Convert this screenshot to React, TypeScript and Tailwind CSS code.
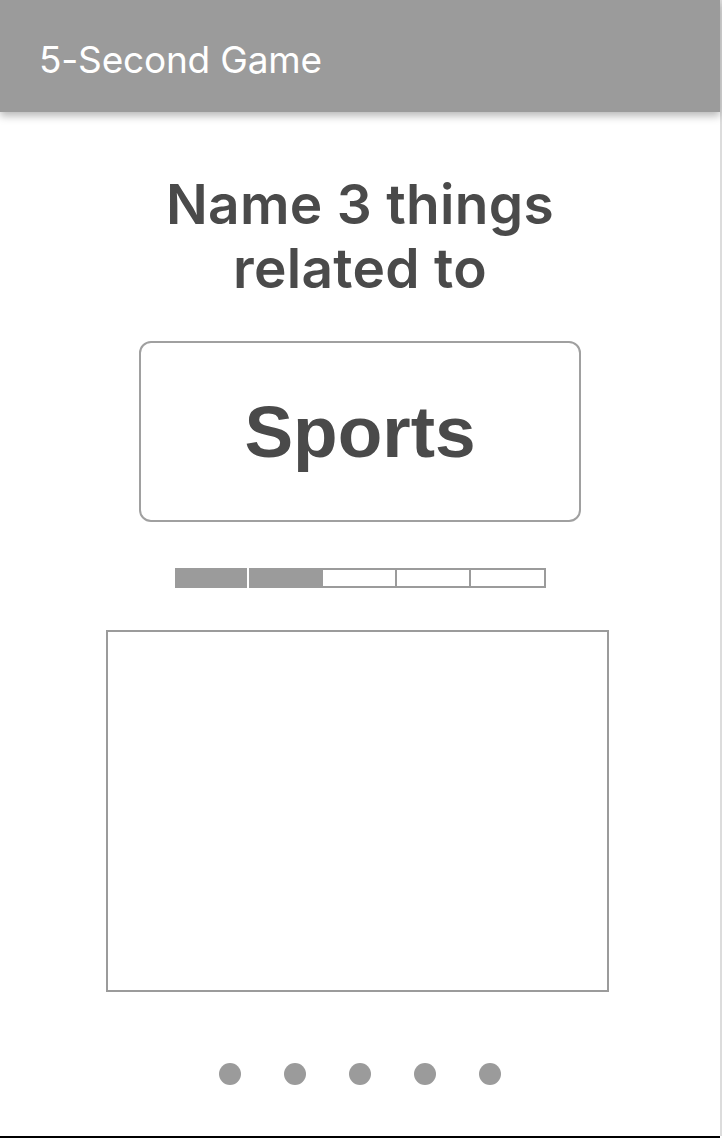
import React from 'react';

const ProgressBar = ({ filled, total }: { filled: number; total: number }) => (
  <div className="flex h-[20px] w-[371px]">
    {Array.from({ length: total }).map((_, i) =>
      i < filled ? (
        <div key={i} className="h-full flex-1 bg-[#9b9b9b] mr-[2px]" />
      ) : (
        <div key={i} className="h-full flex-1 border-2 border-[#9b9b9b] bg-white -ml-[2px] first:ml-0" />
      )
    )}
  </div>
);

export default function App() {
  return (
    <div className="flex h-[1138px] w-[722px] bg-white" style={{ fontFamily: 'Inter, "Noto Sans", sans-serif' }}>
      <div className="flex h-full w-[720px] flex-col items-center border-b-2 border-black">
        {/* Header */}
        <header className="relative z-10 flex h-[112px] w-full shrink-0 items-center bg-[#9b9b9b] pl-[39px] pt-[6px] shadow-[0_4px_8px_rgba(0,0,0,0.28)]">
          <h1 className="text-[37px] font-normal leading-none tracking-[-0.2px] text-white">5-Second Game</h1>
        </header>

        {/* Prompt */}
        <h2 className="mt-[60px] text-center text-[55px] font-semibold leading-[64px] tracking-[0.3px] text-[#4a4a4a]">
          Name 3 things
          <br />
          related to
        </h2>

        {/* Category card */}
        <div className="mt-[41px] flex h-[181px] w-[442px] items-center justify-center rounded-[12px] border-2 border-[#a0a0a0]">
          <span
            className="text-[73px] font-bold leading-none text-[#4a4a4a]"
            style={{ fontFamily: '"Liberation Sans", Arial, sans-serif' }}
          >
            Sports
          </span>
        </div>

        {/* Timer */}
        <div className="mt-[46px]">
          <ProgressBar filled={2} total={5} />
        </div>

        {/* Answer area */}
        <div className="mt-[42px] mr-[5px] h-[362px] w-[503px] border-2 border-[#9b9b9b]" />

        {/* Page dots */}
        <div className="mt-[71px] flex gap-[43px]">
          {[0, 1, 2, 3, 4].map((i) => (
            <span key={i} className="h-[22px] w-[22px] rounded-full bg-[#9b9b9b]" />
          ))}
        </div>
      </div>
      <div className="h-[1136px] w-[2px] bg-[#dcdcdc]" />
    </div>
  );
}
